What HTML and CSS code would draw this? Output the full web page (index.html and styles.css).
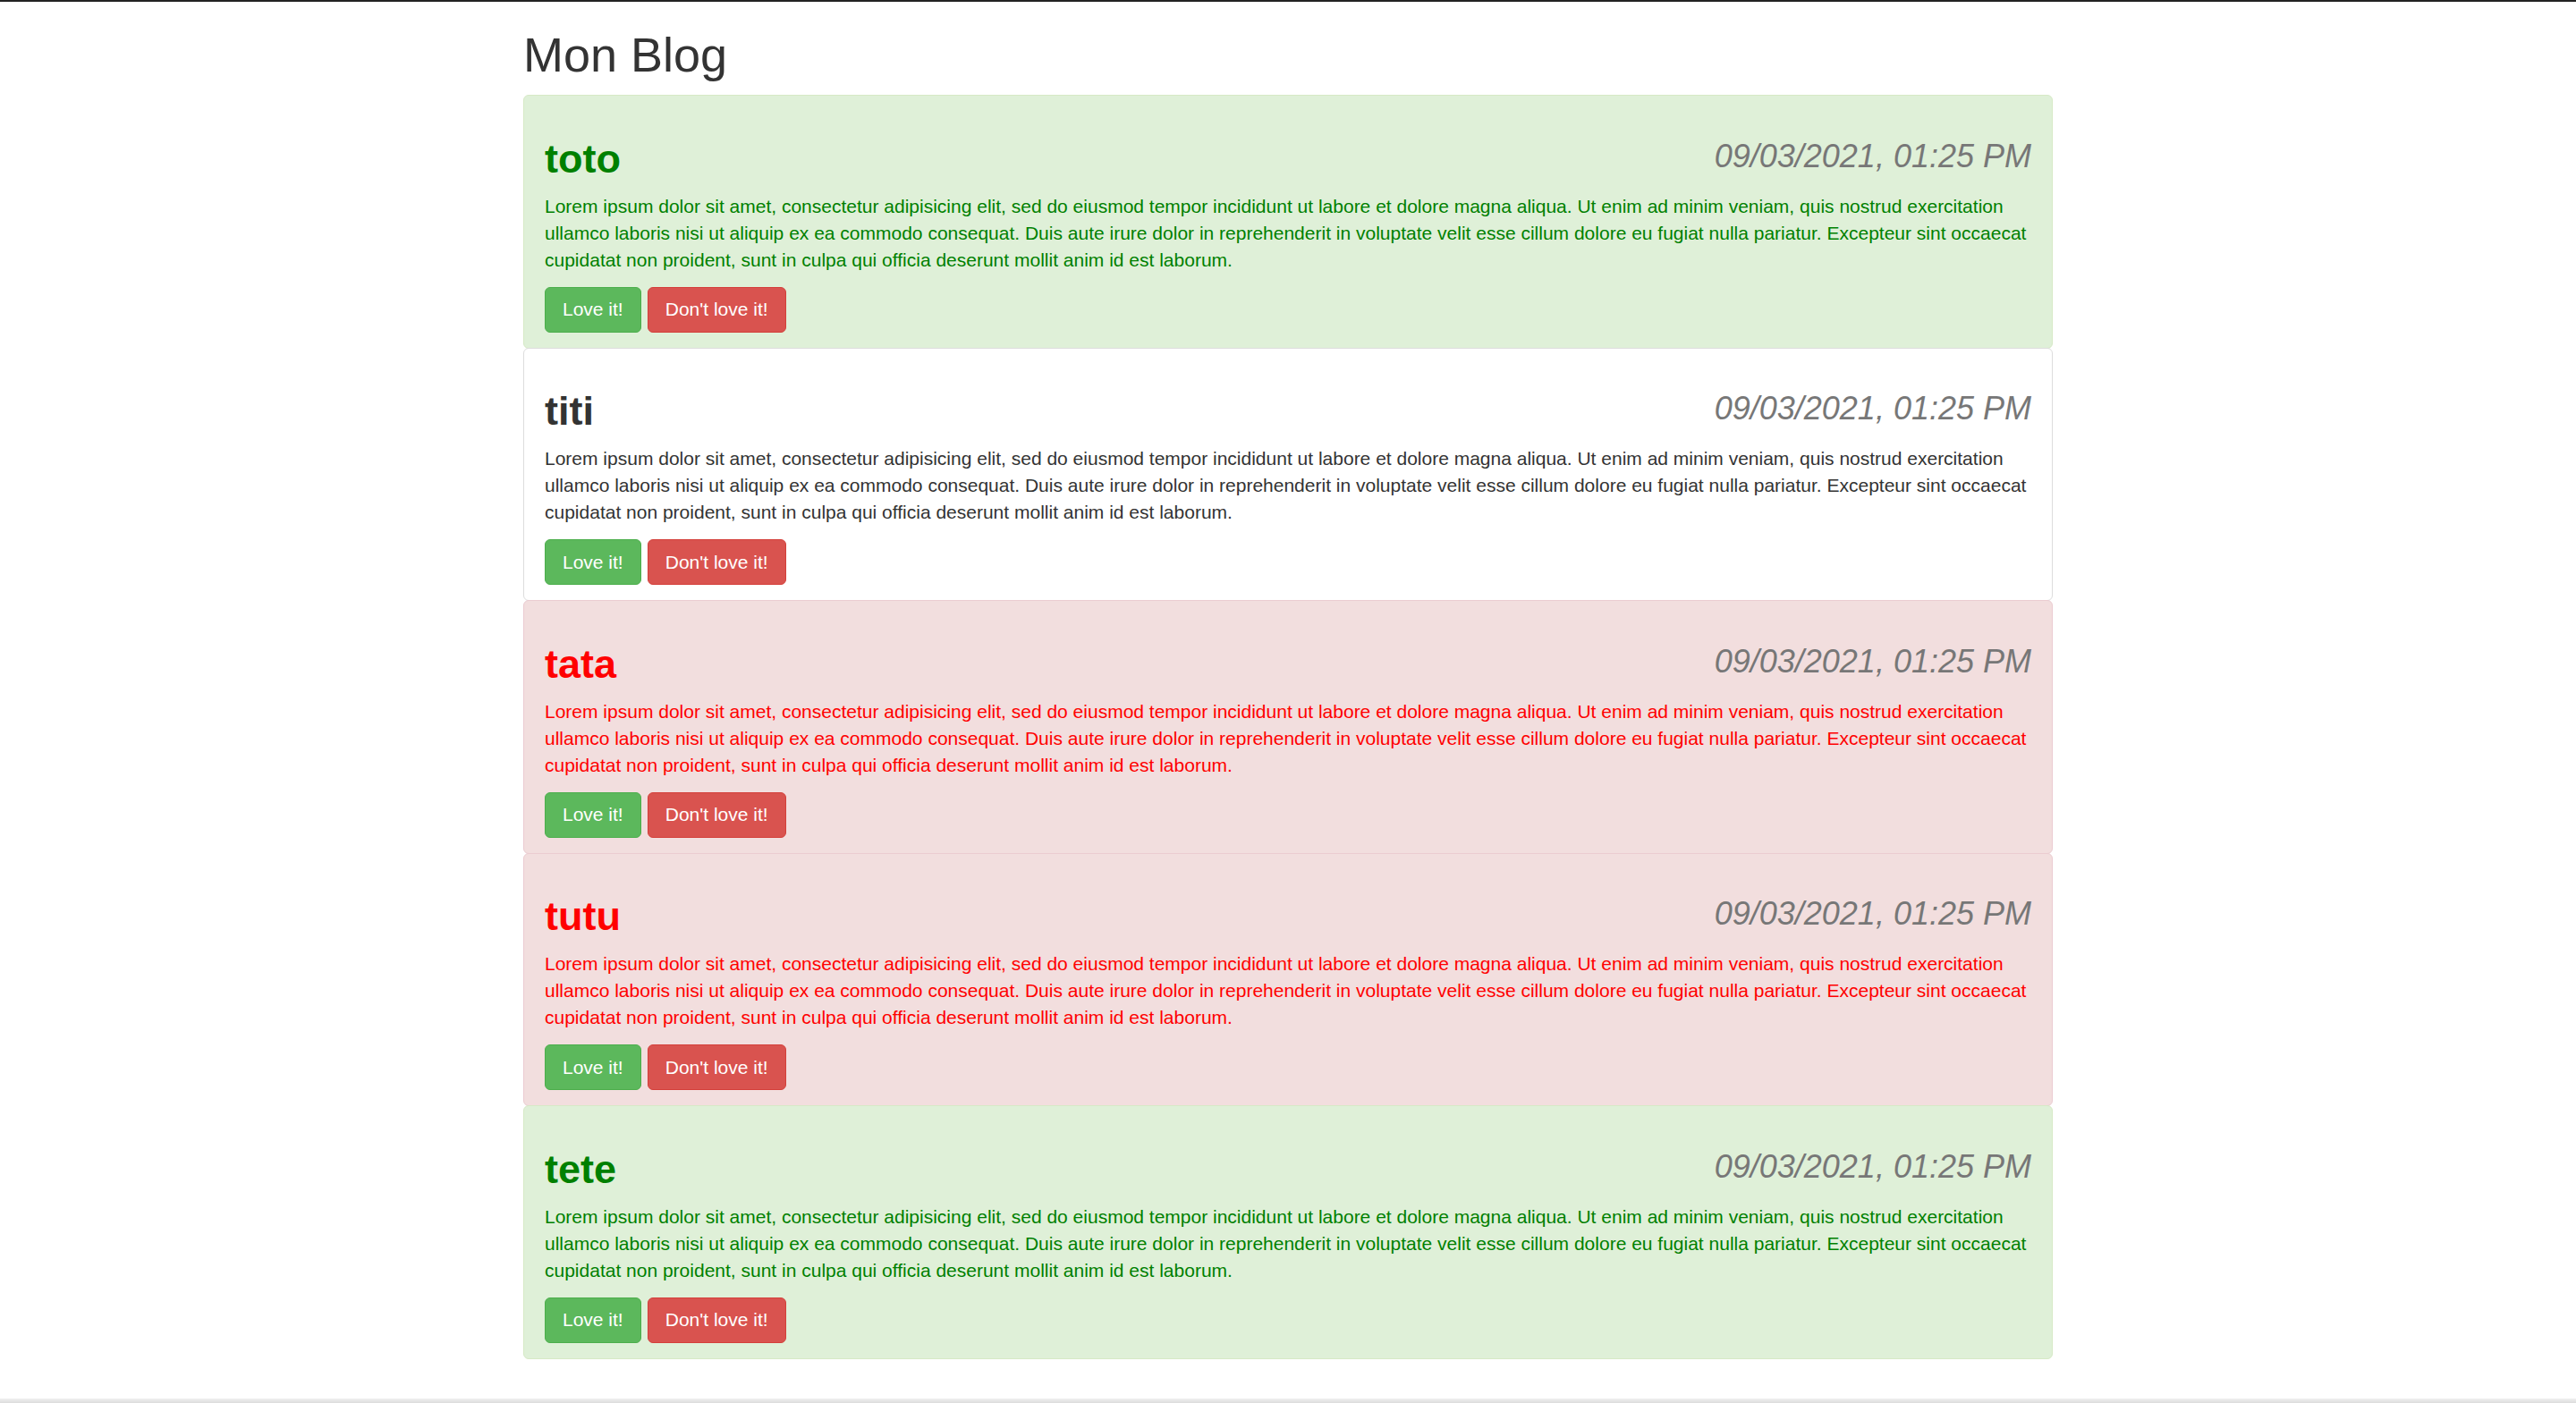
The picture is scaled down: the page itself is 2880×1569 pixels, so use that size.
FILE: index.html
```html
<!DOCTYPE html>
<html lang="fr">
<head>
<meta charset="utf-8">
<title>Mon Blog</title>
<link rel="stylesheet" href="styles.css">
</head>
<body>
<div class="topbar"></div>
<div class="container">
  <h1 class="page-title">Mon Blog</h1>
  <ul class="post-list">
    <li class="post post-success">
      <h3 class="post-date">09/03/2021, 01:25 PM</h3>
      <h2 class="post-title">toto</h2>
      <p class="post-text">Lorem ipsum dolor sit amet, consectetur adipisicing elit, sed do eiusmod tempor incididunt ut labore et dolore magna aliqua. Ut enim ad minim veniam, quis nostrud exercitation ullamco laboris nisi ut aliquip ex ea commodo consequat. Duis aute irure dolor in reprehenderit in voluptate velit esse cillum dolore eu fugiat nulla pariatur. Excepteur sint occaecat cupidatat non proident, sunt in culpa qui officia deserunt mollit anim id est laborum.</p>
      <div class="post-actions">
        <button class="btn btn-success">Love it!</button>
        <button class="btn btn-danger">Don't love it!</button>
      </div>
    </li>
    <li class="post post-default">
      <h3 class="post-date">09/03/2021, 01:25 PM</h3>
      <h2 class="post-title">titi</h2>
      <p class="post-text">Lorem ipsum dolor sit amet, consectetur adipisicing elit, sed do eiusmod tempor incididunt ut labore et dolore magna aliqua. Ut enim ad minim veniam, quis nostrud exercitation ullamco laboris nisi ut aliquip ex ea commodo consequat. Duis aute irure dolor in reprehenderit in voluptate velit esse cillum dolore eu fugiat nulla pariatur. Excepteur sint occaecat cupidatat non proident, sunt in culpa qui officia deserunt mollit anim id est laborum.</p>
      <div class="post-actions">
        <button class="btn btn-success">Love it!</button>
        <button class="btn btn-danger">Don't love it!</button>
      </div>
    </li>
    <li class="post post-danger">
      <h3 class="post-date">09/03/2021, 01:25 PM</h3>
      <h2 class="post-title">tata</h2>
      <p class="post-text">Lorem ipsum dolor sit amet, consectetur adipisicing elit, sed do eiusmod tempor incididunt ut labore et dolore magna aliqua. Ut enim ad minim veniam, quis nostrud exercitation ullamco laboris nisi ut aliquip ex ea commodo consequat. Duis aute irure dolor in reprehenderit in voluptate velit esse cillum dolore eu fugiat nulla pariatur. Excepteur sint occaecat cupidatat non proident, sunt in culpa qui officia deserunt mollit anim id est laborum.</p>
      <div class="post-actions">
        <button class="btn btn-success">Love it!</button>
        <button class="btn btn-danger">Don't love it!</button>
      </div>
    </li>
    <li class="post post-danger">
      <h3 class="post-date">09/03/2021, 01:25 PM</h3>
      <h2 class="post-title">tutu</h2>
      <p class="post-text">Lorem ipsum dolor sit amet, consectetur adipisicing elit, sed do eiusmod tempor incididunt ut labore et dolore magna aliqua. Ut enim ad minim veniam, quis nostrud exercitation ullamco laboris nisi ut aliquip ex ea commodo consequat. Duis aute irure dolor in reprehenderit in voluptate velit esse cillum dolore eu fugiat nulla pariatur. Excepteur sint occaecat cupidatat non proident, sunt in culpa qui officia deserunt mollit anim id est laborum.</p>
      <div class="post-actions">
        <button class="btn btn-success">Love it!</button>
        <button class="btn btn-danger">Don't love it!</button>
      </div>
    </li>
    <li class="post post-success">
      <h3 class="post-date">09/03/2021, 01:25 PM</h3>
      <h2 class="post-title">tete</h2>
      <p class="post-text">Lorem ipsum dolor sit amet, consectetur adipisicing elit, sed do eiusmod tempor incididunt ut labore et dolore magna aliqua. Ut enim ad minim veniam, quis nostrud exercitation ullamco laboris nisi ut aliquip ex ea commodo consequat. Duis aute irure dolor in reprehenderit in voluptate velit esse cillum dolore eu fugiat nulla pariatur. Excepteur sint occaecat cupidatat non proident, sunt in culpa qui officia deserunt mollit anim id est laborum.</p>
      <div class="post-actions">
        <button class="btn btn-success">Love it!</button>
        <button class="btn btn-danger">Don't love it!</button>
      </div>
    </li>
  </ul>
</div>
<div class="bottom-edge"></div>
</body>
</html>
```

FILE: styles.css
```css
html, body {
  margin: 0;
  padding: 0;
  background: #fff;
}

body {
  font-family: "Liberation Sans", Helvetica, Arial, sans-serif;
  font-size: 21px;
  line-height: 30px;
  color: #333;
}

.topbar {
  height: 2px;
  background: #222;
}

.container {
  width: 1710px;
  margin: 0 auto;
}

.page-title {
  font-size: 54px;
  font-weight: normal;
  line-height: 1.1;
  margin: 30px 0 15px;
  color: #333;
}

.post-list {
  list-style: none;
  margin: 0 0 30px;
  padding: 0;
}

.post {
  display: block;
  padding: 15.5px 23px 17px;
  border: 1px solid #ddd;
  border-radius: 6px;
  margin-bottom: -1px;
  background: #fff;
  position: relative;
}

.post-success {
  background: #dff0d8;
  border-color: #d6e9c6;
  color: green;
}

.post-danger {
  background: #f2dede;
  border-color: #ebccd1;
  color: red;
}

.post-default {
  color: #333;
}

.post-date {
  float: right;
  margin: 32px 0 15px;
  font-size: 36px;
  line-height: 1.1;
  font-weight: normal;
  font-style: italic;
  color: #777;
}

.post-title {
  margin: 30px 0 13.5px;
  font-size: 45px;
  line-height: 1.1;
  font-weight: bold;
}

.post-text {
  margin: 0 0 15px;
}

.post-actions {
  display: flex;
  gap: 7px;
}

.btn {
  font-family: "Liberation Sans", Helvetica, Arial, sans-serif;
  font-size: 21px;
  line-height: 30px;
  padding: 9.5px 19px;
  border: 1px solid transparent;
  border-radius: 6px;
  color: #fff;
  cursor: pointer;
}

.btn-success {
  background: #5cb85c;
  border-color: #4cae4c;
}

.btn-danger {
  background: #d9534f;
  border-color: #d43f3a;
}

.bottom-edge {
  position: fixed;
  left: 0;
  right: 0;
  bottom: 0;
  height: 5px;
  background: linear-gradient(#f0f0f0, #dcdcdc);
}
```
